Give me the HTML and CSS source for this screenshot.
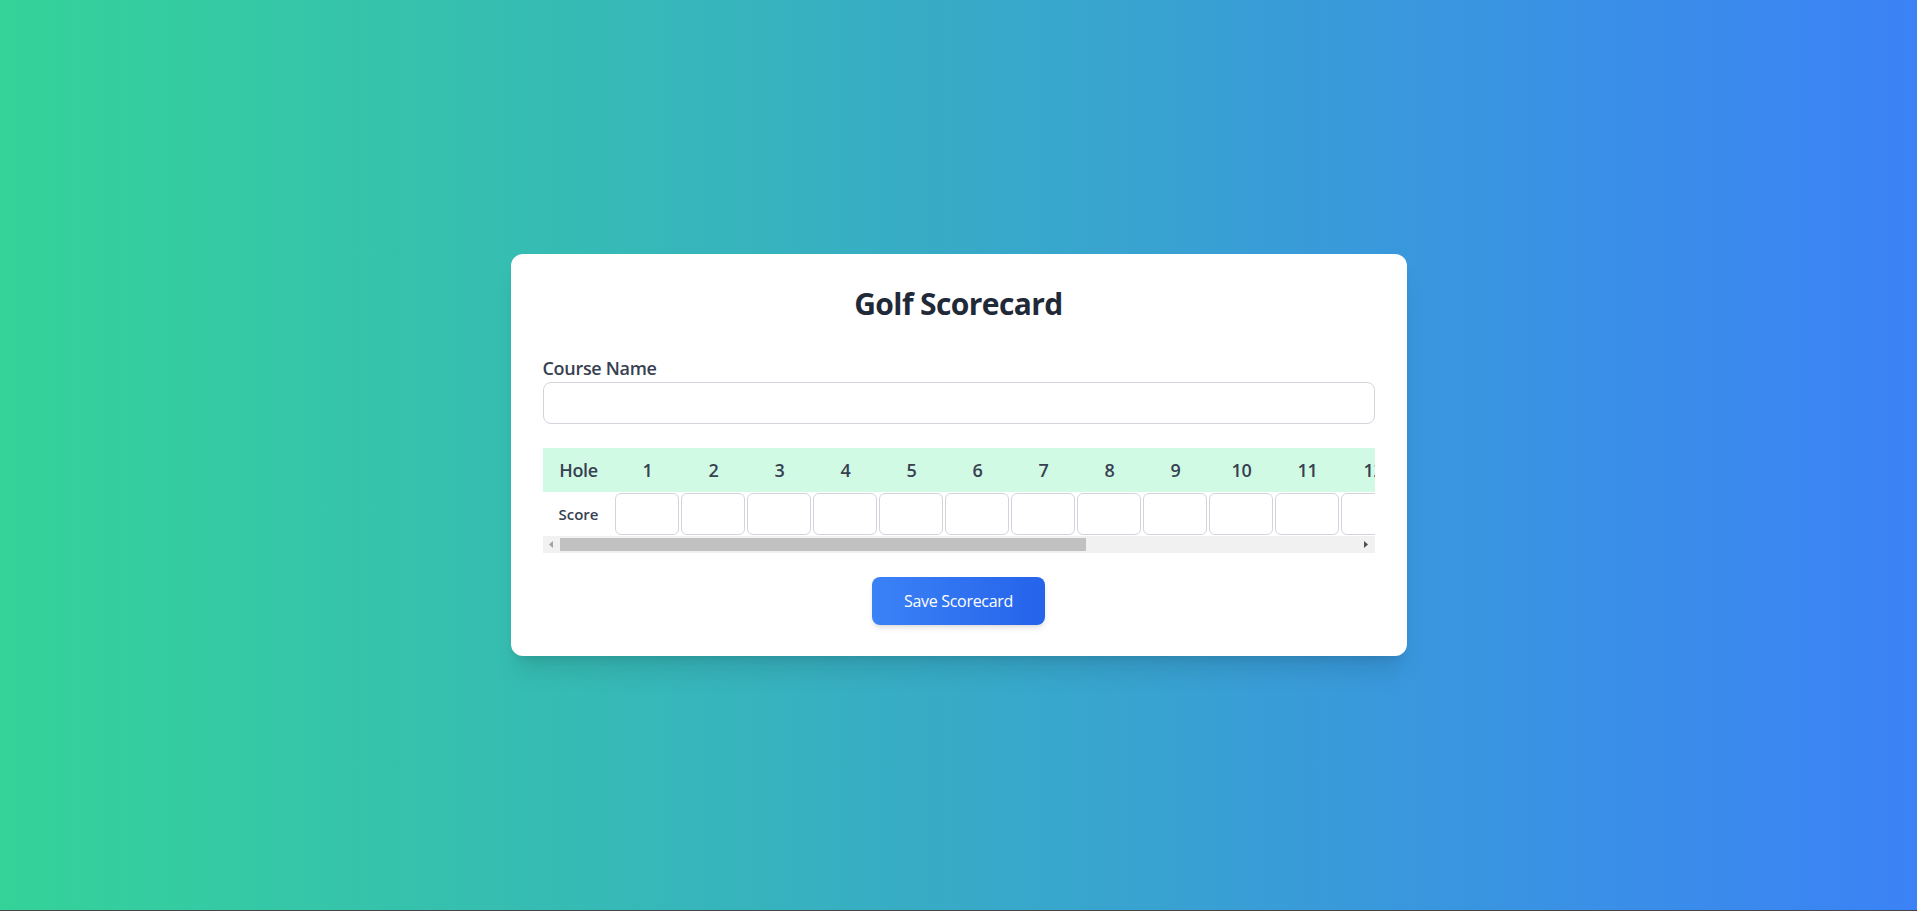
FILE: index.html
```html
<!DOCTYPE html>
<html lang="en">
<head>
<meta charset="utf-8">
<title>Golf Scorecard</title>
<link rel="stylesheet" href="styles.css">
</head>
<body>
<main class="page">
  <section class="card">
    <h1 class="title">Golf Scorecard</h1>
    <div class="field">
      <label class="label" for="course">Course Name</label>
      <input id="course" class="text-input" type="text">
    </div>
    <div class="table-wrap">
      <div class="table-scroll">
        <table class="score-table">
          <thead>
            <tr>
              <th class="row-head">Hole</th>
              <th>1</th><th>2</th><th>3</th><th>4</th><th>5</th><th>6</th>
              <th>7</th><th>8</th><th>9</th><th>10</th><th>11</th><th>12</th>
              <th>13</th><th>14</th><th>15</th><th>16</th><th>17</th><th>18</th>
            </tr>
          </thead>
          <tbody>
            <tr>
              <td class="row-head">Score</td>
              <td><input class="score-input" type="text"></td>
              <td><input class="score-input" type="text"></td>
              <td><input class="score-input" type="text"></td>
              <td><input class="score-input" type="text"></td>
              <td><input class="score-input" type="text"></td>
              <td><input class="score-input" type="text"></td>
              <td><input class="score-input" type="text"></td>
              <td><input class="score-input" type="text"></td>
              <td><input class="score-input" type="text"></td>
              <td><input class="score-input" type="text"></td>
              <td><input class="score-input" type="text"></td>
              <td><input class="score-input" type="text"></td>
              <td><input class="score-input" type="text"></td>
              <td><input class="score-input" type="text"></td>
              <td><input class="score-input" type="text"></td>
              <td><input class="score-input" type="text"></td>
              <td><input class="score-input" type="text"></td>
              <td><input class="score-input" type="text"></td>
            </tr>
          </tbody>
        </table>
      </div>
      <div class="scrollbar" aria-hidden="true">
        <span class="sb-btn">
          <svg width="4" height="7" viewBox="0 0 4 7"><path d="M4 0v7L0 3.5z" fill="#a3a3a3"/></svg>
        </span>
        <span class="sb-track">
          <span class="sb-thumb" style="width: 66%"></span>
        </span>
        <span class="sb-btn">
          <svg width="4" height="7" viewBox="0 0 4 7"><path d="M0 0v7L4 3.5z" fill="#505050"/></svg>
        </span>
      </div>
    </div>
    <div class="actions">
      <button class="save-btn" type="button">Save Scorecard</button>
    </div>
  </section>
</main>
</body>
</html>
```

FILE: styles.css
```css
html {
  background: #454545;
}

body {
  margin: 0;
  height: 910px;
  background: linear-gradient(to right, #34d399, #3b82f6);
  font-family: "Open Sans", "Noto Sans", sans-serif;
}

.page {
  height: 100%;
  display: flex;
  align-items: center;
  justify-content: center;
}

.card {
  width: 896px;
  box-sizing: border-box;
  padding: 32px 32px 31px;
  background: #ffffff;
  border-radius: 12px;
  box-shadow: 0 20px 25px -5px rgba(0, 0, 0, 0.1), 0 8px 10px -6px rgba(0, 0, 0, 0.1);
}

.title {
  margin: 0 0 32px;
  font-size: 30px;
  line-height: 36px;
  font-weight: 700;
  text-align: center;
  color: #1f2937;
  letter-spacing: -0.6px;
}

.field {
  margin-bottom: 24px;
}

.label {
  display: block;
  font-size: 18px;
  line-height: 28px;
  font-weight: 600;
  color: #374151;
  letter-spacing: -0.3px;
}

.text-input {
  display: block;
  width: 100%;
  height: 42px;
  box-sizing: border-box;
  padding: 8px 12px;
  border: 1px solid #d1d5db;
  border-radius: 8px;
  font: inherit;
  font-size: 16px;
  outline: none;
}

.table-scroll {
  overflow: hidden;
}

.scrollbar {
  display: flex;
  height: 17px;
  background: #f1f1f1;
}

.sb-btn {
  flex: 0 0 17px;
  display: flex;
  align-items: center;
  justify-content: center;
}

.sb-track {
  flex: 1;
  display: flex;
  align-items: center;
}

.sb-thumb {
  display: block;
  height: 13px;
  background: #c1c1c1;
}

.score-table {
  border-collapse: collapse;
}

.score-table thead tr {
  background: #d1fae5;
}

.score-table th {
  padding: 8px 16px;
  font-size: 18px;
  line-height: 28px;
  font-weight: 600;
  color: #374151;
  text-align: center;
  letter-spacing: -0.4px;
}

.score-table td {
  padding: 1px;
}

.score-table td.row-head {
  padding: 0 16px;
  font-size: 15px;
  font-weight: 600;
  color: #374151;
  text-align: center;
  letter-spacing: 0;
}

.score-input {
  display: block;
  width: 64px;
  height: 42px;
  box-sizing: border-box;
  border: 1px solid #d1d5db;
  border-radius: 6px;
  background: #ffffff;
  font: inherit;
  outline: none;
}

.actions {
  display: flex;
  justify-content: center;
  margin-top: 24px;
}

.save-btn {
  padding: 12px 32px;
  border: none;
  border-radius: 8px;
  background: linear-gradient(to right, #3b82f6, #2563eb);
  color: #ffffff;
  font-family: inherit;
  font-size: 16px;
  line-height: 24px;
  font-weight: 400;
  letter-spacing: -0.3px;
  box-shadow: 0 4px 6px -1px rgba(0, 0, 0, 0.1), 0 2px 4px -2px rgba(0, 0, 0, 0.1);
  cursor: pointer;
}
```
